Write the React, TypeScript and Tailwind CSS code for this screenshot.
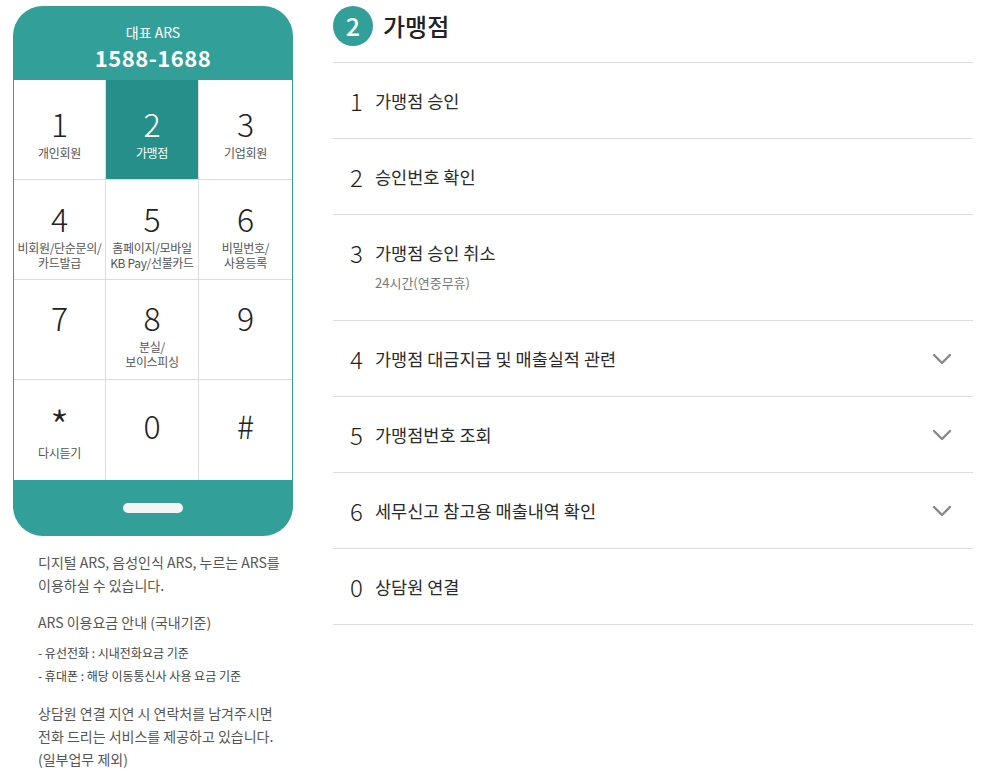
import React from 'react';

interface KeyItem {
  digit: string;
  labels: string[];
  active?: boolean;
}

const rows: { pad: string; keys: KeyItem[] }[] = [
  {
    pad: 'pt-[26px]',
    keys: [
      { digit: '1', labels: ['개인회원'] },
      { digit: '2', labels: ['가맹점'], active: true },
      { digit: '3', labels: ['기업회원'] },
    ],
  },
  {
    pad: 'pt-[21px]',
    keys: [
      { digit: '4', labels: ['비회원/단순문의/', '카드발급'] },
      { digit: '5', labels: ['홈페이지/모바일', 'KB Pay/선불카드'] },
      { digit: '6', labels: ['비밀번호/', '사용등록'] },
    ],
  },
  {
    pad: 'pt-[20px]',
    keys: [
      { digit: '7', labels: [] },
      { digit: '8', labels: ['분실/', '보이스피싱'] },
      { digit: '9', labels: [] },
    ],
  },
  {
    pad: 'pt-[28px]',
    keys: [
      { digit: '*', labels: ['다시듣기'] },
      { digit: '0', labels: [] },
      { digit: '#', labels: [] },
    ],
  },
];

interface MenuItem {
  num: string;
  title: string;
  sub?: string;
  expand?: boolean;
}

const menu: MenuItem[] = [
  { num: '1', title: '가맹점 승인' },
  { num: '2', title: '승인번호 확인' },
  { num: '3', title: '가맹점 승인 취소', sub: '24시간(연중무휴)' },
  { num: '4', title: '가맹점 대금지급 및 매출실적 관련', expand: true },
  { num: '5', title: '가맹점번호 조회', expand: true },
  { num: '6', title: '세무신고 참고용 매출내역 확인', expand: true },
  { num: '0', title: '상담원 연결' },
];

const Chevron = () => (
  <svg width="20" height="12" viewBox="0 0 20 12" fill="none">
    <path d="M2 2l8 8 8-8" stroke="#888" strokeWidth="2.4" strokeLinecap="round" strokeLinejoin="round" />
  </svg>
);

const App: React.FC = () => {
  return (
    <div
      className="w-[985px] h-[782px] bg-white flex overflow-hidden"
      style={{ fontFamily: '"Noto Sans CJK KR", "Noto Sans", sans-serif' }}
    >
      {/* Left: phone keypad */}
      <div className="w-[333px] shrink-0 pl-[13px] pt-[6px]">
        <div className="w-[280px] bg-[#339f99] rounded-[30px] overflow-hidden">
          <div className="h-[74px] flex flex-col items-center pt-[16px] text-white">
            <div className="text-[14px] leading-[20px]">대표 ARS</div>
            <div className="text-[22px] leading-[30px] font-bold tracking-[0.5px]">1588-1688</div>
          </div>
          <div className="mx-[1px] bg-white">
            {rows.map((row, ri) => (
              <div key={ri} className="grid grid-cols-[92px_93px_93px] border-b border-[#dddddd] last:border-b-0 h-[100px]">
                {row.keys.map((k, ki) => (
                  <div
                    key={ki}
                    className={`flex flex-col items-center ${row.pad} ${
                      ki < 2 ? 'border-r border-[#dddddd]' : ''
                    } ${k.active ? 'bg-[#278f89] text-white' : 'text-[#222]'}`}
                  >
                    {k.digit === '*' ? (
                      <div className="h-[34px] text-[44px] leading-[34px] font-light">{k.digit}</div>
                    ) : (
                      <div className="h-[34px] text-[32px] leading-[34px] font-light">{k.digit}</div>
                    )}
                    <div className={k.digit === '*' ? 'mt-[3px]' : 'mt-[5px]'}>
                      {k.labels.map((l) => (
                        <div
                          key={l}
                          className={`text-center text-[12px] leading-[15px] tracking-[-0.3px] ${k.active ? 'text-white' : 'text-[#555]'}`}
                        >
                          {l}
                        </div>
                      ))}
                    </div>
                  </div>
                ))}
              </div>
            ))}
          </div>
          <div className="h-[56px] flex items-center justify-center">
            <div className="w-[60px] h-[10px] rounded-full bg-[#f5f5f5]" />
          </div>
        </div>

        <div className="pl-[25px] pt-[15px] text-[14px] leading-[23px] text-[#555]">
          <p>디지털 ARS, 음성인식 ARS, 누르는 ARS를</p>
          <p>이용하실 수 있습니다.</p>
          <p className="mt-[14px]">ARS 이용요금 안내 (국내기준)</p>
          <div className="mt-[7px] text-[12px] leading-[23px] text-[#444]">
            <p>- 유선전화 : 시내전화요금 기준</p>
            <p>- 휴대폰 : 해당 이동통신사 사용 요금 기준</p>
          </div>
          <p className="mt-[15px]">상담원 연결 지연 시 연락처를 남겨주시면</p>
          <p>전화 드리는 서비스를 제공하고 있습니다.</p>
          <p>(일부업무 제외)</p>
        </div>
      </div>

      {/* Right: menu */}
      <div className="w-[640px] shrink-0">
        <div className="h-[63px] flex items-start pt-[6px] gap-[10px] border-b border-[#dddddd]">
          <div className="w-[40px] h-[40px] rounded-full bg-[#339f99] text-white flex items-center justify-center text-[25px] font-medium">
            2
          </div>
          <div className="text-[24px] leading-[40px] text-[#222] font-medium">가맹점</div>
        </div>
        {menu.map((m) => (
          <div
            key={m.num}
            className="border-b border-[#dddddd] pl-[17px] pr-[21px] pt-[25px] pb-[24px] flex items-start justify-between"
          >
            <div>
              <div className="flex items-center h-[26px]">
                <span className="w-[25px] text-[24px] font-light text-[#222]">{m.num}</span>
                <span className="text-[17.5px] text-[#2a2a2a]">{m.title}</span>
              </div>
              {m.sub && (
                <div className="pl-[25px] mt-[7px] pb-[3px] text-[13px] leading-[20px] text-[#777]">{m.sub}</div>
              )}
            </div>
            {m.expand && (
              <div className="h-[26px] flex items-center">
                <Chevron />
              </div>
            )}
          </div>
        ))}
      </div>
    </div>
  );
};

export default App;
